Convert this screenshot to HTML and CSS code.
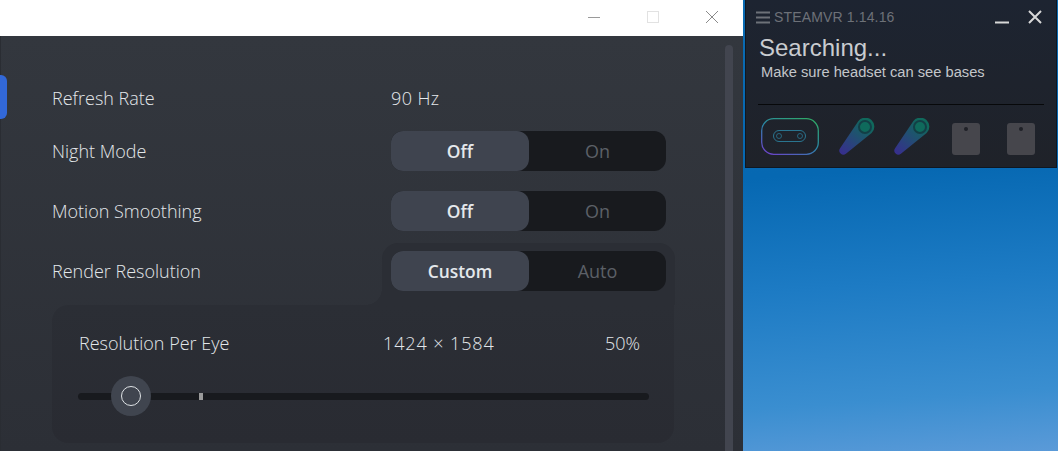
FILE: index.html
```html
<!DOCTYPE html>
<html lang="en">
<head>
<meta charset="utf-8">
<title>SteamVR Settings</title>
<link rel="stylesheet" href="styles.css">
</head>
<body>
<div class="desktop">
  <section class="app">
    <header class="titlebar">
      <svg class="win-icon" width="14" height="14" viewBox="0 0 14 14"><path d="M1 7.5H13" stroke="#9a9a9a" fill="none"/></svg>
      <svg class="win-icon" width="14" height="14" viewBox="0 0 14 14"><rect x="1.5" y="1.5" width="11" height="11" stroke="#e2e2e2" fill="none"/></svg>
      <svg class="win-icon" width="14" height="14" viewBox="0 0 14 14"><path d="M1 1L13 13M13 1L1 13" stroke="#8a8a8a" fill="none"/></svg>
    </header>
    <main class="content">
      <div class="nav-marker"></div>
      <div class="scrollbar"></div>
      <div class="settings">
        <div class="row row-refresh">
          <span class="label">Refresh Rate</span>
          <span class="value">90 Hz</span>
        </div>
        <div class="row row-toggle">
          <span class="label">Night Mode</span>
          <div class="toggle"><span class="opt opt-on">Off</span><span class="opt">On</span></div>
        </div>
        <div class="row row-toggle">
          <span class="label">Motion Smoothing</span>
          <div class="toggle"><span class="opt opt-on">Off</span><span class="opt">On</span></div>
        </div>
        <div class="row row-render">
          <span class="label">Render Resolution</span>
          <div class="tab-wrap">
            <div class="toggle"><span class="opt opt-on">Custom</span><span class="opt">Auto</span></div>
          </div>
        </div>
        <div class="subpanel">
          <div class="sub-head">
            <span class="sub-label">Resolution Per Eye</span>
            <span class="sub-res">1424 × 1584</span>
            <span class="sub-pct">50%</span>
          </div>
          <div class="slider">
            <span class="tick"></span>
            <span class="thumb"><span class="thumb-ring"></span></span>
          </div>
        </div>
      </div>
    </main>
  </section>

  <section class="vr">
    <header class="vr-top">
      <svg class="vr-menu" width="14" height="13" viewBox="0 0 14 13"><path d="M0 1.5H14M0 6.5H14M0 11.5H14" stroke="#6d7178" stroke-width="2" fill="none"/></svg>
      <span class="vr-title">STEAMVR 1.14.16</span>
      <svg class="vr-min" width="14" height="14" viewBox="0 0 14 14"><path d="M0 12.5H14" stroke="#d8d8d8" stroke-width="2" fill="none"/></svg>
      <svg class="vr-close" width="14" height="14" viewBox="0 0 14 14"><path d="M1 1L13 13M13 1L1 13" stroke="#d8d8d8" stroke-width="2" fill="none"/></svg>
    </header>
    <h1 class="vr-status">Searching...</h1>
    <p class="vr-hint">Make sure headset can see bases</p>
    <div class="vr-rule"></div>
    <div class="devices">
      <svg class="dev dev-hmd" width="58" height="37" viewBox="0 0 58 37">
        <defs>
          <linearGradient id="hmdg" x1="0.85" y1="0" x2="0.15" y2="1">
            <stop offset="0" stop-color="#2fa868"/>
            <stop offset="0.5" stop-color="#2a86a8"/>
            <stop offset="1" stop-color="#6a45c8"/>
          </linearGradient>
        </defs>
        <rect x=".7" y=".7" width="56.6" height="35.6" rx="12" fill="none" stroke="url(#hmdg)" stroke-width="1.3"/>
        <rect x="12.5" y="12.5" width="32" height="11" rx="5.5" fill="none" stroke="#2a7590" stroke-width="1"/>
        <circle cx="18" cy="18" r="2.5" fill="none" stroke="#2a7590" stroke-width=".8"/>
        <circle cx="39" cy="18" r="2.5" fill="none" stroke="#2a7590" stroke-width=".8"/>
      </svg>
      <svg class="dev dev-ctrl" width="37" height="38" viewBox="0 0 37 38">
        <defs>
          <linearGradient id="ctrlg" x1="0.75" y1="0.1" x2="0.1" y2="0.95">
            <stop offset="0" stop-color="#10695c"/>
            <stop offset="1" stop-color="#36308c"/>
          </linearGradient>
        </defs>
        <path d="M20.4 2.9A9 9 0 1 1 33.6 15.1L7.9 35.7A4 4 0 0 1 2.1 30.3Z" fill="url(#ctrlg)"/>
        <circle cx="27" cy="9" r="6" fill="#0f6a5c" stroke="#133f46" stroke-width="2"/>
      </svg>
      <svg class="dev dev-ctrl" width="37" height="38" viewBox="0 0 37 38">
        <path d="M20.4 2.9A9 9 0 1 1 33.6 15.1L7.9 35.7A4 4 0 0 1 2.1 30.3Z" fill="url(#ctrlg)"/>
        <circle cx="27" cy="9" r="6" fill="#0f6a5c" stroke="#133f46" stroke-width="2"/>
      </svg>
      <svg class="dev dev-base" width="28" height="32" viewBox="0 0 28 32"><rect width="28" height="32" rx="3" fill="#46464c"/><circle cx="14" cy="6" r="2" fill="#1f2127"/></svg>
      <svg class="dev dev-base" width="28" height="32" viewBox="0 0 28 32"><rect width="28" height="32" rx="3" fill="#46464c"/><circle cx="14" cy="6" r="2" fill="#1f2127"/></svg>
    </div>
  </section>
</div>
</body>
</html>
```

FILE: styles.css
```css
* { box-sizing: border-box; }
html, body { margin: 0; height: 100%; overflow: hidden; }
body { font-family: "Open Sans", "Noto Sans", sans-serif; }

.desktop {
  position: relative;
  width: 1058px;
  height: 451px;
  overflow: hidden;
  background: linear-gradient(176deg, #0c6cb2 0%, #0668b2 44%, #1d7bc4 66%, #3a8ed0 88%, #5a9ad8 100%);
}

/* Settings window */
.app {
  position: absolute;
  left: 0;
  top: 0;
  width: 743px;
  height: 451px;
  display: flex;
  flex-direction: column;
  background: #fff;
}
.titlebar {
  height: 36px;
  flex: none;
  display: flex;
  justify-content: flex-end;
  align-items: center;
  gap: 45px;
  padding: 0 24px 2px 0;
  background: #fff;
}
.win-icon { display: block; }

.content {
  position: relative;
  flex: 1;
  background: linear-gradient(180deg, #33373e 0%, #2c2f36 100%);
  box-shadow: inset 1px 0 0 #2a2d33;
  overflow: hidden;
}
.nav-marker {
  position: absolute;
  left: 0;
  top: 39px;
  width: 7px;
  height: 44px;
  background: #3268d8;
  border-radius: 0 6px 6px 0;
}
.scrollbar {
  position: absolute;
  left: 725px;
  top: 9px;
  width: 8px;
  height: 420px;
  background: #42454f;
  border-radius: 4px 4px 0 0;
}
.settings {
  width: 622px;
  margin-left: 52px;
  padding-top: 44px;
}
.row {
  display: flex;
  align-items: center;
  color: #e3e7ea;
  font-size: 18px;
  font-weight: 300;
}
.row .label { width: 339px; flex: none; }
.row-refresh { height: 35px; margin-bottom: 16px; }
.row-toggle { height: 40px; margin-bottom: 20px; }
.row-render { height: 62px; align-items: flex-start; margin-top: -8px; }
.row-render .label { padding-top: 16px; }
.value { color: #e6e9ec; letter-spacing: .4px; }

.toggle {
  width: 275px;
  height: 40px;
  display: flex;
  background: #181a1e;
  border-radius: 12px;
}
.opt {
  flex: 0 0 137px;
  display: flex;
  align-items: center;
  justify-content: center;
  color: #5c6067;
  font-size: 18px;
  font-weight: 400;
}
.opt-on {
  flex-basis: 138px;
  background: #3f444f;
  border-radius: 12px;
  color: #e4e8ec;
  font-size: 17.4px;
  font-weight: 600;
}

.tab-wrap {
  position: relative;
  margin-left: -9px;
  padding: 8px 9px 0;
  width: 293px;
  height: 62px;
  background: #2b2e35;
  border-radius: 16px 16px 0 0;
}
.tab-wrap::before {
  content: "";
  position: absolute;
  left: -16px;
  bottom: 0;
  width: 16px;
  height: 16px;
  background: radial-gradient(circle at 0 0, transparent 15.5px, #2b2e35 16px);
}

.subpanel {
  height: 138px;
  padding: 25px 26px 0 27px;
  background: linear-gradient(180deg, #2b2e35 0%, #292b32 100%);
  border-radius: 16px;
  border-top-right-radius: 0;
  color: #e3e7ea;
  font-size: 18px;
  font-weight: 300;
}
.sub-head {
  display: flex;
  align-items: center;
  height: 26px;
}
.sub-label { width: 304px; flex: none; }
.sub-res { width: 222px; flex: none; letter-spacing: .9px; }

.slider {
  position: relative;
  height: 7px;
  width: 571px;
  margin-top: 37px;
  margin-left: -1px;
  background: #181a1e;
  border-radius: 4px;
}
.tick {
  position: absolute;
  left: 121px;
  top: 0;
  width: 4px;
  height: 7px;
  background: #9a9a9a;
}
.thumb {
  position: absolute;
  left: 33px;
  top: -17px;
  width: 40px;
  height: 40px;
  display: flex;
  align-items: center;
  justify-content: center;
  background: #40454f;
  border-radius: 50%;
}
.thumb-ring {
  width: 20px;
  height: 20px;
  border: 1px solid #dfe3e6;
  border-radius: 50%;
}

/* SteamVR status window */
.vr {
  position: absolute;
  left: 745px;
  top: 0;
  width: 312px;
  height: 168px;
  padding: 0 0 0 15px;
  background: linear-gradient(180deg, #1d2431 0%, #1f2229 100%);
  border: 1px solid #0f1722;
  border-top: 0;
  font-family: "Liberation Sans", Arial, sans-serif;
}
.vr-top {
  display: flex;
  align-items: center;
  height: 34px;
  margin-left: -5px;
}
.vr-menu { flex: none; margin-right: 4px; }
.vr-title { color: #6d7178; font-size: 14px; letter-spacing: .15px; }
.vr-min { margin-left: auto; margin-right: 19px; }
.vr-close { margin-right: 14px; }
.vr-status {
  margin: 0 0 0 -2px;
  color: #c9ccd0;
  font-size: 24px;
  font-weight: 400;
  line-height: 28px;
}
.vr-hint {
  margin: 0;
  color: #c3c6ca;
  font-size: 14.7px;
  line-height: 20px;
}
.vr-rule {
  width: 286px;
  height: 1px;
  margin: 22px 0 0 -3px;
  background: #07080a;
}
.devices {
  display: flex;
  align-items: flex-start;
  margin-top: 13px;
}
.dev { display: block; flex: none; }
.dev-ctrl { margin-left: 19px; }
.dev-ctrl + .dev-ctrl { margin-left: 18px; }
.dev-base { margin-left: 22px; margin-top: 5px; }
.dev-base + .dev-base { margin-left: 27px; }
```
